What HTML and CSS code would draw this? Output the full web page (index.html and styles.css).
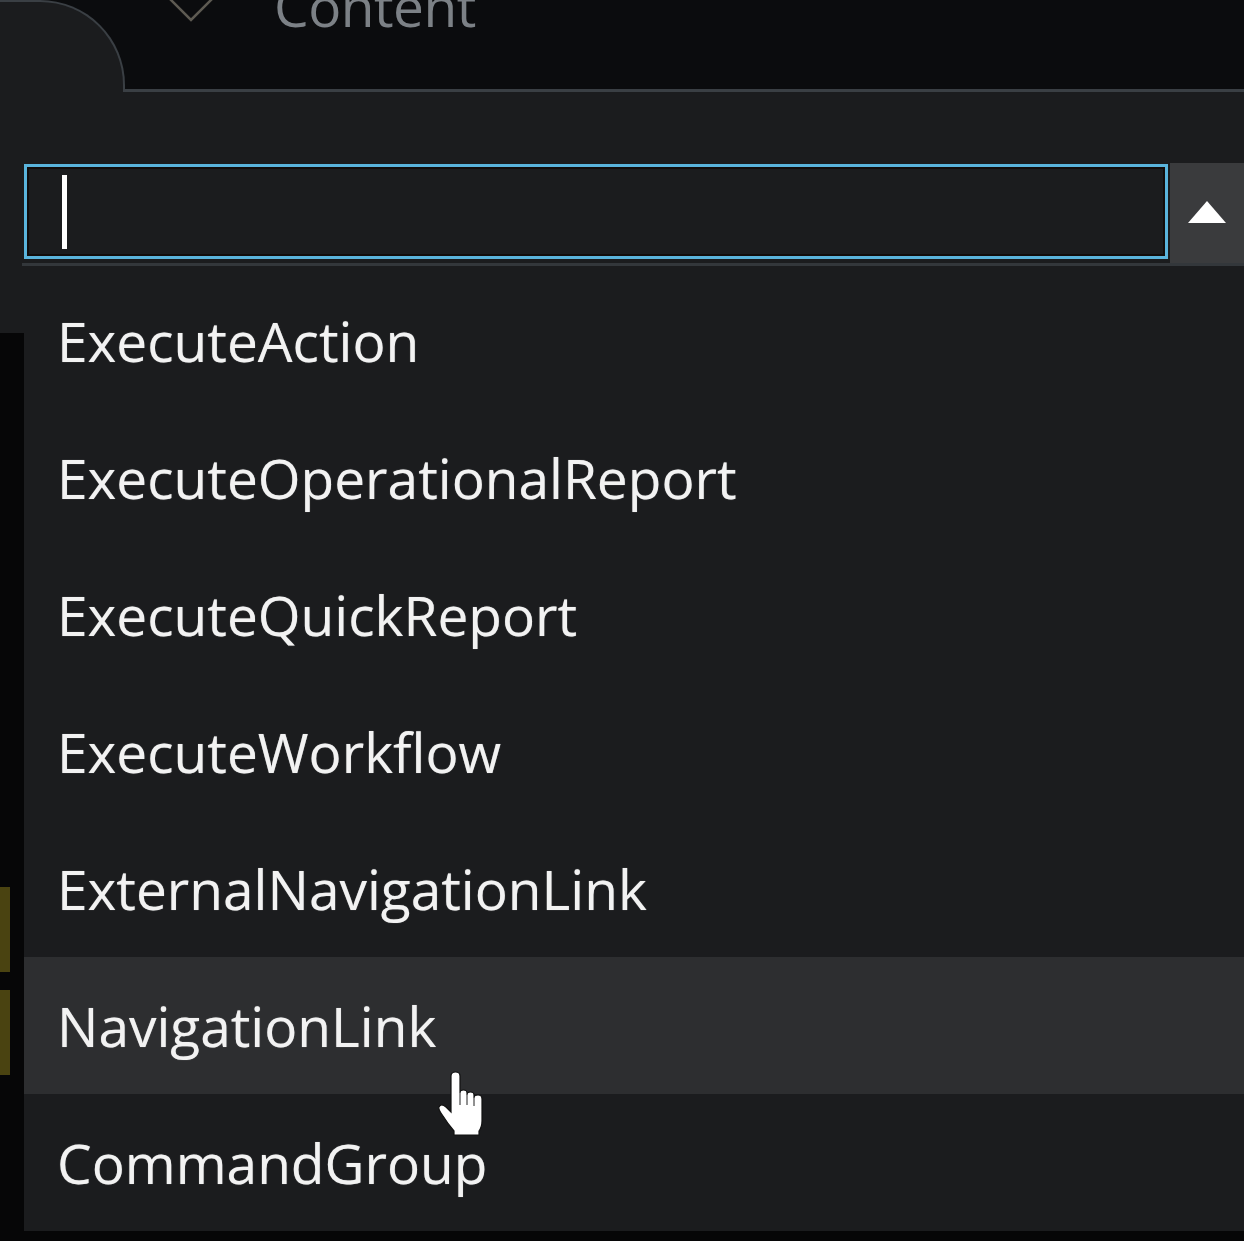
FILE: index.html
```html
<!DOCTYPE html>
<html lang="en">
<head>
    <meta charset="UTF-8">
    <meta name="viewport" content="width=device-width, initial-scale=1.0">
    <title>Command picker</title>
    <link rel="stylesheet" href="styles.css">
</head>
<body>
    <div class="header">
        <div class="tab"></div>
        <div class="title-bar">
            <svg class="chevron" width="56" height="26" viewBox="0 0 56 26">
                <path d="M2 -6 L28 20 L54 -6" fill="none" stroke="#5d5a52" stroke-width="2.5"/>
            </svg>
            <span class="title">Content</span>
        </div>
    </div>

    <div class="panel">
        <div class="combo">
            <div class="field">
                <div class="input"><span class="caret"></span></div>
            </div>
            <div class="toggle">
                <svg width="40" height="24" viewBox="0 0 40 24">
                    <path d="M20 1 L39 23 L1 23 Z" fill="#ffffff"/>
                </svg>
            </div>
        </div>
    </div>

    <div class="below">
        <div class="marker"></div>
        <div class="marker"></div>
    </div>

    <ul class="dropdown">
        <li>ExecuteAction</li>
        <li>ExecuteOperationalReport</li>
        <li>ExecuteQuickReport</li>
        <li>ExecuteWorkflow</li>
        <li>ExternalNavigationLink</li>
        <li class="hover">NavigationLink</li>
        <li>CommandGroup</li>
    </ul>

    <svg class="pointer" width="50" height="66" viewBox="0 0 50 66">
        <path d="M13 5 Q13 1 17.5 1 Q22 1 22 5 L22 22 Q22 19 25.5 19 Q29 19 29 22 L29 24 Q29 21 32.5 21 Q36 21 36 24 L36 27 Q36 24 40 24 Q44 24 44 28 L44 50 Q44 56 41 60 L41 64 L16 64 L16 60 Q10 53 5 45 Q0 38 1 36 Q3 32 8 36 L13 41 Z" fill="#ffffff" stroke="#111111" stroke-width="1.2"/>
        <path d="M22 22 L22 34 M29 24 L29 34 M36 27 L36 35" fill="none" stroke="#222222" stroke-width="1"/>
    </svg>
</body>
</html>
```

FILE: styles.css
```css
body {
    margin: 0;
    background: #0b0c0e;
    font-family: "Open Sans", "Liberation Sans", sans-serif;
    height: 1241px;
    overflow: hidden;
    position: relative;
}
.header {
    display: flex;
    height: 92px;
}
.tab {
    width: 123px;
    height: 90px;
    background: #1b1c1e;
    border-top: 2px solid #3a3f44;
    border-right: 2px solid #3a3f44;
    border-top-right-radius: 85px;
}
.title-bar {
    flex: 1;
    display: flex;
    align-items: flex-start;
    border-bottom: 3px solid #3a3f44;
    overflow: hidden;
}
.chevron {
    margin-left: 38px;
    margin-top: 0;
}
.title {
    margin-left: 55px;
    margin-top: -31px;
    font-size: 55px;
    line-height: 74px;
    color: #7c8186;
    letter-spacing: -0.5px;
}
.panel {
    background: #1b1c1e;
    height: 241px;
    padding-top: 71px;
    box-sizing: border-box;
}
.combo {
    display: flex;
    margin-left: 22px;
    height: 100px;
    border-bottom: 3px solid #33373b;
}
.field {
    flex: 1;
    padding: 1px 2px 4px 2px;
}
.input {
    height: 89px;
    border: 3px solid #5ab4dc;
    box-shadow: inset 0 0 0 2px #120d0c;
    background: #1b1c1e;
    display: flex;
    align-items: center;
    padding-left: 35px;
}
.caret {
    width: 5px;
    height: 74px;
    background: #ffffff;
}
.toggle {
    width: 74px;
    background: #3a3b3d;
    display: flex;
    align-items: center;
    justify-content: center;
    padding-bottom: 3px;
}
.below {
    background: #060607;
    height: 908px;
    padding-top: 554px;
    box-sizing: border-box;
}
.marker {
    width: 10px;
    height: 85px;
    background: #4a4311;
    margin-bottom: 18px;
}
.dropdown {
    position: absolute;
    top: 272px;
    left: 24px;
    right: 0;
    margin: 0;
    padding: 0;
    list-style: none;
    background: #1b1c1e;
}
.dropdown li {
    height: 137px;
    display: flex;
    align-items: center;
    padding-left: 33px;
    font-size: 55px;
    color: #f2f2f2;
    letter-spacing: 0;
    text-shadow: 0 0 1px rgba(255, 255, 255, 0.5);
}
.dropdown li.hover {
    background: #2d2e30;
}
.pointer {
    position: absolute;
    left: 438px;
    top: 1071px;
}
```
